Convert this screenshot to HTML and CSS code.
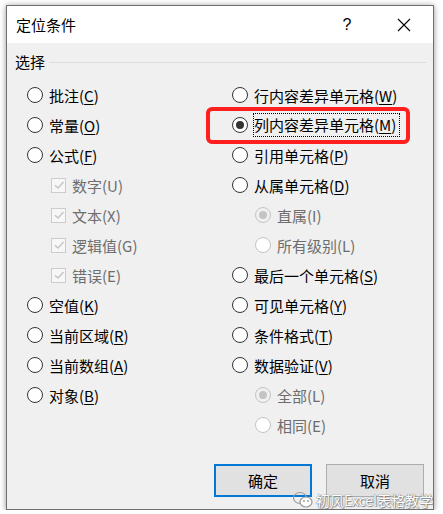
FILE: index.html
```html
<!DOCTYPE html>
<html lang="zh-CN">
<head>
    <meta charset="UTF-8">
    <title>定位条件</title>
    <link rel="stylesheet" href="styles.css">
</head>
<body>
    <div class="dialog">
        <div class="titlebar">
            <span class="title">定位条件</span>
            <span class="title-btn">?</span>
            <span class="title-btn close">
                <svg width="14" height="14" viewBox="0 0 14 14"><path d="M1 1 L13 13 M13 1 L1 13" stroke="#000" stroke-width="1.1" fill="none"/></svg>
            </span>
        </div>

        <div class="content">
            <div class="group-head">
                <span>选择</span>
                <span class="group-line"></span>
            </div>

            <div class="columns">
                <div class="col">
                    <div class="row"><span class="radio"></span><span class="label">批注(<u>C</u>)</span></div>
                    <div class="row"><span class="radio"></span><span class="label">常量(<u>O</u>)</span></div>
                    <div class="row"><span class="radio"></span><span class="label">公式(<u>F</u>)</span></div>
                    <div class="row sub"><span class="check"><svg width="12" height="12" viewBox="0 0 12 12"><path d="M2 6.2 L5 9 L10.5 3" stroke="#c4c4c4" stroke-width="1.4" fill="none"/></svg></span><span class="label">数字(U)</span></div>
                    <div class="row sub"><span class="check"><svg width="12" height="12" viewBox="0 0 12 12"><path d="M2 6.2 L5 9 L10.5 3" stroke="#c4c4c4" stroke-width="1.4" fill="none"/></svg></span><span class="label">文本(X)</span></div>
                    <div class="row sub"><span class="check"><svg width="12" height="12" viewBox="0 0 12 12"><path d="M2 6.2 L5 9 L10.5 3" stroke="#c4c4c4" stroke-width="1.4" fill="none"/></svg></span><span class="label">逻辑值(G)</span></div>
                    <div class="row sub"><span class="check"><svg width="12" height="12" viewBox="0 0 12 12"><path d="M2 6.2 L5 9 L10.5 3" stroke="#c4c4c4" stroke-width="1.4" fill="none"/></svg></span><span class="label">错误(E)</span></div>
                    <div class="row"><span class="radio"></span><span class="label">空值(<u>K</u>)</span></div>
                    <div class="row"><span class="radio"></span><span class="label">当前区域(<u>R</u>)</span></div>
                    <div class="row"><span class="radio"></span><span class="label">当前数组(<u>A</u>)</span></div>
                    <div class="row"><span class="radio"></span><span class="label">对象(<u>B</u>)</span></div>
                </div>
                <div class="col">
                    <div class="row"><span class="radio"></span><span class="label">行内容差异单元格(<u>W</u>)</span></div>
                    <div class="row"><span class="radio checked"></span><span class="label focus">列内容差异单元格(<u>M</u>)</span></div>
                    <div class="row"><span class="radio"></span><span class="label">引用单元格(<u>P</u>)</span></div>
                    <div class="row"><span class="radio"></span><span class="label">从属单元格(<u>D</u>)</span></div>
                    <div class="row sub"><span class="radio checked"></span><span class="label">直属(I)</span></div>
                    <div class="row sub"><span class="radio"></span><span class="label">所有级别(L)</span></div>
                    <div class="row"><span class="radio"></span><span class="label">最后一个单元格(<u>S</u>)</span></div>
                    <div class="row"><span class="radio"></span><span class="label">可见单元格(<u>Y</u>)</span></div>
                    <div class="row"><span class="radio"></span><span class="label">条件格式(<u>T</u>)</span></div>
                    <div class="row"><span class="radio"></span><span class="label">数据验证(<u>V</u>)</span></div>
                    <div class="row sub"><span class="radio checked"></span><span class="label">全部(L)</span></div>
                    <div class="row sub"><span class="radio"></span><span class="label">相同(E)</span></div>
                </div>
            </div>

            <div class="buttons">
                <button class="btn default">确定</button>
                <button class="btn">取消</button>
            </div>
        </div>

        <div class="highlight"></div>

        <div class="watermark">
            <svg width="22" height="18" viewBox="0 0 22 18">
                <ellipse cx="8" cy="7" rx="6.5" ry="5.5" fill="none" stroke="#9a9a9a" stroke-width="1.2"/>
                <ellipse cx="14" cy="11" rx="6" ry="5" fill="#fff" stroke="#9a9a9a" stroke-width="1.2"/>
                <circle cx="12" cy="10" r="0.9" fill="#9a9a9a"/>
                <circle cx="16" cy="10" r="0.9" fill="#9a9a9a"/>
            </svg>
            <span>初风Excel表格教学</span>
        </div>
    </div>
</body>
</html>
```

FILE: styles.css
```css
body {
    margin: 0;
    background-color: #ffffff;
    font-family: "Noto Sans CJK SC", "Noto Sans", sans-serif;
    font-size: 15px;
    color: #000000;
}
.dialog {
    position: relative;
    width: 426px;
    height: 503px;
    margin: 5px 0 0 6px;
    border: 1px solid #6f6f6f;
    background-color: #f0f0f0;
    box-shadow: 0 0 6px rgba(0, 0, 0, 0.3), 0 3px 6px rgba(0, 0, 0, 0.15);
}
.titlebar {
    display: flex;
    align-items: center;
    height: 37px;
    padding-left: 9px;
    background-color: #ffffff;
}
.title {
    flex: 1;
    line-height: 20px;
}
.title-btn {
    width: 46px;
    text-align: center;
    font-family: "Liberation Sans", sans-serif;
    font-size: 16px;
    line-height: 20px;
}
.title-btn.close {
    display: flex;
    justify-content: center;
    margin-right: 6px;
    margin-left: 11px;
}
.content {
    padding: 9px 0 0 0;
}
.group-head {
    display: flex;
    align-items: center;
    padding-left: 8px;
    padding-right: 7px;
    line-height: 20px;
}
.group-line {
    flex: 1;
    height: 1px;
    margin-left: 4px;
    background-color: #dcdcdc;
}
.columns {
    display: grid;
    grid-template-columns: 205px 1fr;
    margin-top: 8px;
    padding-left: 20px;
}
.row {
    display: flex;
    align-items: center;
    height: 30px;
}
.row.sub {
    padding-left: 23px;
}
.radio {
    position: relative;
    box-sizing: border-box;
    width: 16px;
    height: 16px;
    border: 1px solid #333333;
    border-radius: 50%;
    background-color: #ffffff;
    margin-right: 6px;
    flex-shrink: 0;
}
.radio.checked::after {
    content: "";
    position: absolute;
    left: 3px;
    top: 3px;
    width: 8px;
    height: 8px;
    border-radius: 50%;
    background-color: #333333;
}
.sub .radio {
    border-color: #c4c4c4;
    background-color: #ffffff;
}
.sub .radio.checked {
    background-color: #f0f0f0;
}
.sub .radio.checked::after {
    background-color: #c4c4c4;
}
.check {
    box-sizing: border-box;
    display: flex;
    align-items: center;
    justify-content: center;
    width: 15px;
    height: 15px;
    border: 1px solid #cccccc;
    background-color: #f7f7f7;
    margin-right: 6px;
    margin-left: 1px;
    flex-shrink: 0;
}
.sub .label {
    color: #6d6d6d;
}
.label u {
    text-underline-offset: 2px;
}
.focus {
    line-height: 22px;
    padding: 0 3px 0 0;
    outline: 1px dotted #000000;
    outline-offset: 0;
}
.buttons {
    display: flex;
    justify-content: flex-end;
    gap: 14px;
    margin-top: 24px;
    padding-right: 9px;
}
.btn {
    width: 98px;
    height: 33px;
    font-family: "Noto Sans CJK SC", sans-serif;
    font-size: 15px;
    background-color: #e1e1e1;
    border: 1px solid #adadad;
    color: #000000;
    padding: 0;
}
.btn.default {
    border: 2px solid #0078d7;
}
.highlight {
    position: absolute;
    left: 199px;
    top: 101px;
    width: 196px;
    height: 29px;
    border: 4px solid #ff1f1f;
    border-radius: 6px;
}
.watermark {
    position: absolute;
    left: 285px;
    top: 484px;
    display: flex;
    align-items: center;
    gap: 2px;
    font-size: 14px;
    color: #ffffff;
    text-shadow: 0 0 1px #7a7a7a, 0 0 1px #7a7a7a, 1px 1px 1px #8a8a8a;
}
```
